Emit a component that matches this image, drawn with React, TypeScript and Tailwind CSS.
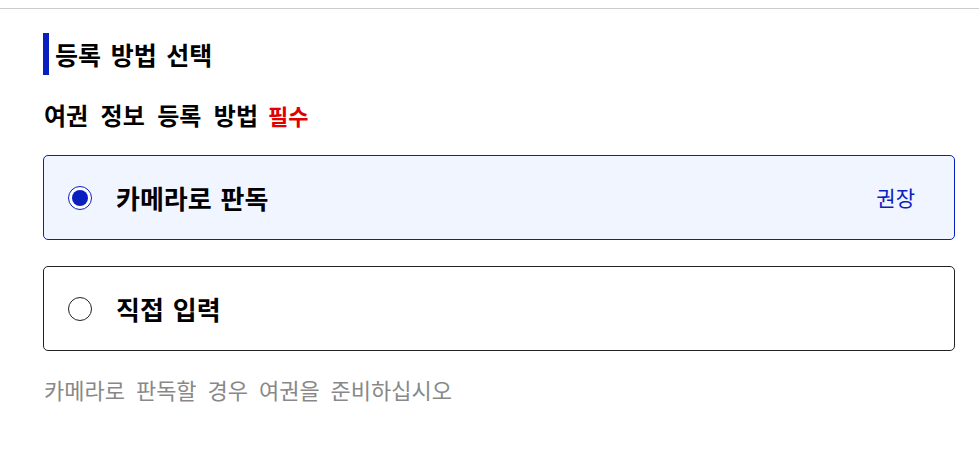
const font = { fontFamily: '"Noto Sans CJK KR", "Noto Sans", sans-serif' };

function Radio({ checked }: { checked: boolean }) {
  return checked ? (
    <span className="flex h-6 w-6 shrink-0 items-center justify-center rounded-full border-[1.5px] border-[#0a1fc0] bg-white">
      <span className="h-4 w-4 rounded-full bg-[#0a1fc0]" />
    </span>
  ) : (
    <span className="h-6 w-6 shrink-0 rounded-full border border-[#222] bg-white" />
  );
}

export default function App() {
  return (
    <div className="min-h-[462px] bg-white text-black" style={font}>
      <div className="h-2" />
      <div className="border-t border-[#cccccc]" />
      <div className="px-[43px] pt-6">
        <div className="flex h-[42px] items-center border-l-[6px] border-[#0a1fc0] pl-[6px]">
          <h2 className="text-[25px] leading-[30px] font-bold [word-spacing:4px]">등록 방법 선택</h2>
        </div>
        <div className="mt-[26px] flex items-baseline gap-[10px] pl-px leading-[28px]">
          <span className="text-[24px] font-bold [word-spacing:7px]">여권 정보 등록 방법</span>
          <span className="text-[22px] font-bold text-[#e00000]">필수</span>
        </div>
        <div className="mt-[26px] w-[912px] space-y-[26px]">
          <label className="flex h-[85px] items-center rounded-[5px] border border-[#0a1fc0] bg-[#f1f5ff] pl-6 pr-[39px]">
            <Radio checked />
            <span className="ml-[24px] flex-1 text-[26px] font-bold [word-spacing:3px]">카메라로 판독</span>
            <span className="text-[21px] text-[#0a1fc0]">권장</span>
          </label>
          <label className="flex h-[85px] items-center rounded-[5px] border border-[#222] bg-white pl-6 pr-[39px]">
            <Radio checked={false} />
            <span className="ml-[24px] flex-1 text-[26px] font-bold [word-spacing:3px]">직접 입력</span>
          </label>
        </div>
        <p className="mt-[24px] pl-px text-[22px] leading-[28px] text-[#888888] [word-spacing:6px]">
          카메라로 판독할 경우 여권을 준비하십시오
        </p>
      </div>
    </div>
  );
}
